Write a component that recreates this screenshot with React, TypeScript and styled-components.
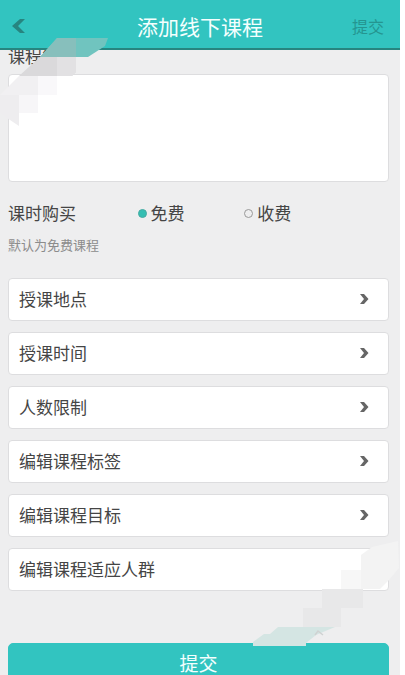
import React from "react";
import styled, { createGlobalStyle } from "styled-components";

const Global = createGlobalStyle`
  * { box-sizing: border-box; }
  body { margin: 0; background: #fff; color: #454545; }
  body, button, textarea { font-family: "Noto Sans CJK SC", sans-serif; font-weight: 400; }
`;

const Page = styled.div`
  position: relative;
  height: 100vh;
  margin-right: 5px;
  background: #eeeeef;
  overflow: hidden;
`;

const Header = styled.header`
  height: 50px;
  padding: 0 12px 0 8px;
  display: grid;
  grid-template-columns: 60px 1fr 56px;
  align-items: center;
  background: #32c4c0;
  border-bottom: 2px solid #278580;
`;

const Title = styled.h1`
  margin: 0;
  padding-top: 4px;
  text-align: center;
  color: #f4fffe;
  font-size: 21px;
  line-height: 30px;
  font-weight: 400;
`;

const BarButton = styled.button<{ $end?: boolean }>`
  height: 32px;
  margin-top: 4px;
  padding: 0 4px;
  border: 0;
  background: none;
  display: flex;
  align-items: center;
  justify-content: ${(p) => (p.$end ? "flex-end" : "flex-start")};
  color: #259590;
  font-size: 16px;
`;

const Form = styled.form`
  padding: 0 11px 0 8px;
`;

const ClippedLabel = styled.label`
  height: 24px;
  display: flex;
  align-items: center;
  overflow: hidden;
  font-size: 17px;
  line-height: 24px;
  padding-bottom: 12px;
`;

const Description = styled.textarea`
  display: block;
  width: 100%;
  height: 108px;
  border: 1px solid #dddddf;
  border-radius: 4px;
  background: #fff;
  resize: none;
  outline: none;
`;

const Purchase = styled.fieldset`
  margin: 19px 0 0;
  padding: 0;
  border: 0;
  display: grid;
  grid-template-columns: 34% 28% 1fr;
  align-items: center;
  font-size: 17px;
  line-height: 24px;
`;

const Choice = styled.label`
  display: flex;
  align-items: center;
  gap: 4px;
`;

const Radio = styled.input`
  appearance: none;
  width: 9px;
  height: 9px;
  margin: 0;
  border: 1px solid #999;
  border-radius: 50%;
  &:checked { background: #34beb2; border-color: #45aaa2; }
`;

const Hint = styled.p`
  margin: 10px 0 0;
  color: #8c8c8c;
  font-size: 13px;
  line-height: 20px;
`;

const Rows = styled.div`
  margin-top: 23px;
  display: grid;
  gap: 11px;
`;

const Row = styled.button`
  width: 100%;
  height: 43px;
  padding: 0 19px 2px 10px;
  border: 1px solid #dddddf;
  border-radius: 4px;
  background: #fff;
  color: #454545;
  display: flex;
  align-items: center;
  justify-content: space-between;
  font-size: 17px;
  line-height: 24px;
`;

const Submit = styled.button`
  width: 100%;
  height: 42px;
  margin-top: 52px;
  padding: 0 0 2px;
  border: 1px solid #32c4c0;
  border-radius: 5px;
  background: #32c4c0;
  color: #f4fffe;
  font-size: 19px;
  line-height: 28px;
`;

const Overlay = styled.svg<{ $bottom?: boolean }>`
  position: absolute;
  pointer-events: none;
  left: ${(p) => (p.$bottom ? "auto" : "0")};
  right: ${(p) => (p.$bottom ? "0" : "auto")};
  top: ${(p) => (p.$bottom ? "540px" : "34px")};
`;

const rows = ["授课地点", "授课时间", "人数限制", "编辑课程标签", "编辑课程目标", "编辑课程适应人群"];

export default function App() {
  return (
    <Page>
      <Global />
      <Header>
        <BarButton type="button" aria-label="返回">
          <svg width="14" height="16" viewBox="0 0 14 16"><path d="M13 1H8L0 8l8 7h5L6 8z" fill="#278580" /></svg>
        </BarButton>
        <Title>添加线下课程</Title>
        <BarButton type="submit" form="course" $end>提交</BarButton>
      </Header>
      <Form id="course" onSubmit={(e) => e.preventDefault()}>
        <ClippedLabel htmlFor="description">课程简介</ClippedLabel>
        <Description id="description" />
        <Purchase aria-labelledby="purchase">
          <span id="purchase">课时购买</span>
          <Choice><Radio type="radio" name="price" defaultChecked />免费</Choice>
          <Choice><Radio type="radio" name="price" />收费</Choice>
        </Purchase>
        <Hint>默认为免费课程</Hint>
        <Rows>
          {rows.map((label, i) => (
            <Row type="button" key={label}>
              {label}
              {i < rows.length - 1 && (
                <svg width="9" height="10" viewBox="0 0 9 10"><path d="M0 0h4l4.500 5-4.500 5H0l4-5z" fill="#666" /></svg>
              )}
            </Row>
          ))}
        </Rows>
        <Submit type="submit">提交</Submit>
      </Form>
      <Overlay width="110" height="100" viewBox="0 34 110 100" aria-hidden="true">
        <path d="M57 38H108L105 46 88 57H40z" fill="#70c4bf" />
        <path d="M57 38H76V57H40z" fill="#87bfbc" />
        <path d="M40 57H76V72L72 76H19z" fill="#dad9db" />
        <path d="M57 57H76V72L72 76H57z" fill="#e2e1e3" />
        <path d="M38 76H57V95H38z" fill="#f9f8fa" />
        <path d="M19 95H38V113H19z" fill="#f7f6f8" />
        <path d="M19 76H38V95H0z" fill="#f1f0f2" />
        <path d="M0 95H19V126L7 118 0 113z" fill="#eeedef" />
      </Overlay>
      <Overlay $bottom width="160" height="110" viewBox="240 540 160 110" aria-hidden="true">
        <path d="M372 547L398 541 399 568 389 580 380 589H361V555z" fill="#f3f3f3" />
        <path d="M341 570H361V589H341z" fill="#f7f7f7" />
        <path d="M322 589H363V608H341V627H303V608H322z" fill="#e8e8e9" />
        <path d="M278 627H335L316 635 306 643V646H253V642L264 634H270z" fill="#d4e5e3" />
        <path d="M315 635l3-4 5 4" fill="none" stroke="#cfd2d2" strokeWidth="1.500" />
      </Overlay>
    </Page>
  );
}
